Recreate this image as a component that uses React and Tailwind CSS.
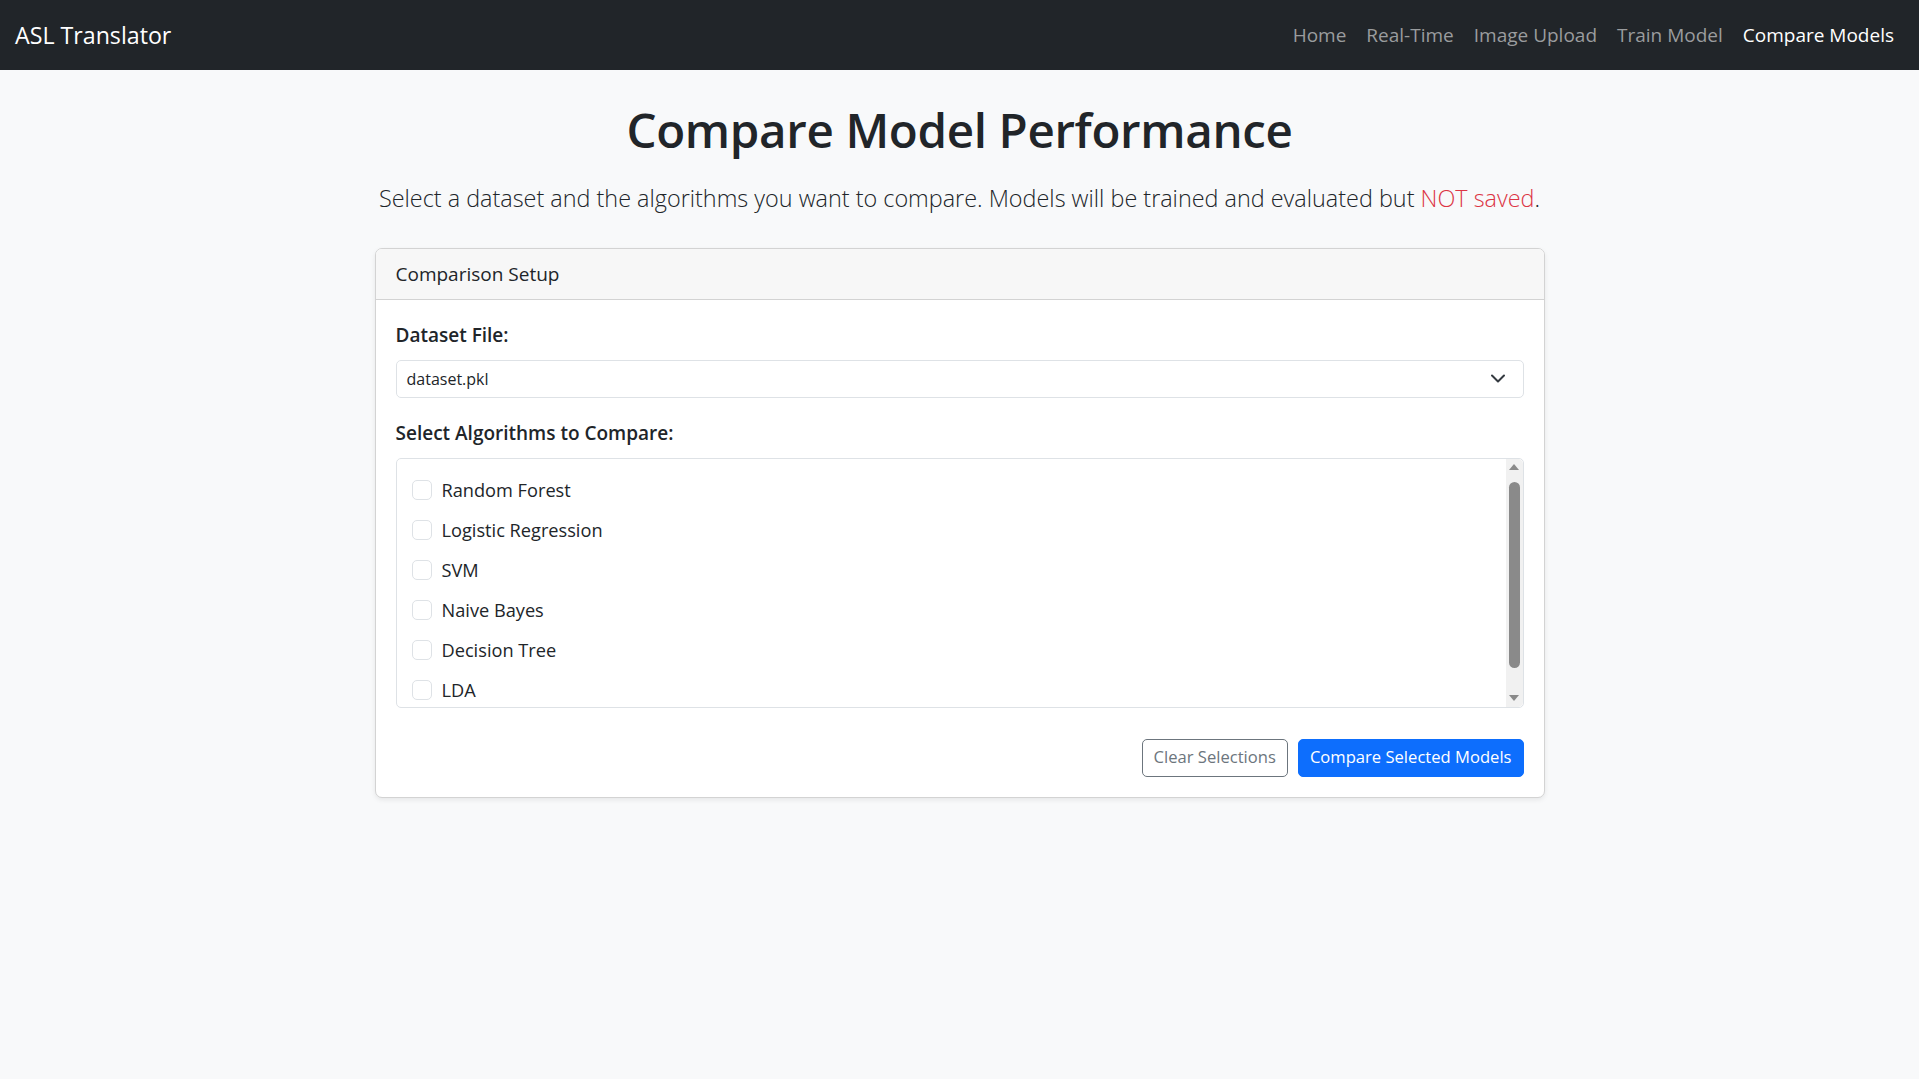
import React from "react";

const links = ["Home", "Real-Time", "Image Upload", "Train Model", "Compare Models"];
const algorithms = [
  "Random Forest",
  "Logistic Regression",
  "SVM",
  "Naive Bayes",
  "Decision Tree",
  "LDA",
];

function Navbar() {
  return (
    <nav className="h-[70px] bg-[#212529] flex items-center justify-between px-[15px]">
      <a href="#" className="text-[23.2px] leading-[37px] text-white">
        ASL Translator
      </a>
      <div className="flex">
        {links.map((l) => (
          <a
            key={l}
            href="#"
            className={
              "px-[10px] text-[19px] leading-[30px] " +
              (l === "Compare Models" ? "text-white" : "text-[#9a9c9e]")
            }
          >
            {l}
          </a>
        ))}
      </div>
    </nav>
  );
}

function FakeScrollbar() {
  return (
    <div className="w-[17px] bg-[#f1f1f1] flex flex-col items-center rounded-tr-[5px] rounded-br-[5px]">
      <div className="h-[17px] flex items-center justify-center">
        <svg width="10" height="6" viewBox="0 0 10 6">
          <path d="M5 0 L10 6 L0 6 Z" fill="#8a8a8a" />
        </svg>
      </div>
      <div className="w-[11px] h-[186px] mt-[6px] rounded-full bg-[#8a8a8a]" />
      <div className="flex-1" />
      <div className="h-[17px] flex items-center justify-center">
        <svg width="10" height="6" viewBox="0 0 10 6">
          <path d="M0 0 L10 0 L5 6 Z" fill="#8a8a8a" />
        </svg>
      </div>
    </div>
  );
}

export default function App() {
  return (
    <div className="min-h-screen bg-[#f8f9fa] text-[#212529] font-['Open_Sans',sans-serif]">
      <Navbar />

      <main className="w-[1170px] mx-auto pt-[30px]">
        <h1 className="text-center text-[47.5px] font-semibold tracking-[-0.35px] leading-[60px] mb-[20px]">
          Compare Model Performance
        </h1>
        <p className="text-center text-[23.4px] font-light leading-[37.5px] mb-[30px] whitespace-nowrap">
          Select a dataset and the algorithms you want to compare. Models will be trained and evaluated but{" "}
          <span className="text-[#dc3545]">NOT saved</span>.
        </p>

        {/* Comparison card */}
        <div className="bg-white border border-[#d3d3d3] rounded-[7px] shadow-[0_2px_5px_rgba(0,0,0,0.075)] overflow-hidden">
          <div className="bg-[#f7f7f7] border-b border-[#d3d3d3] px-[20px] py-[10px] text-[19px] leading-[30px]">
            Comparison Setup
          </div>
          <div className="p-[20px]">
            <label className="block text-[19px] leading-[30px] font-semibold mb-[10px]">Dataset File:</label>
            <div className="h-[38px] border border-[#dee2e6] rounded-[5px] flex items-center justify-between pl-[10px] pr-[18px] text-[16px] mb-[20px]">
              <span>dataset.pkl</span>
              <svg width="14" height="9" viewBox="0 0 14 9" fill="none">
                <path d="M1 1.5 L7 7.5 L13 1.5" stroke="#343a40" strokeWidth="2" strokeLinecap="round" strokeLinejoin="round" />
              </svg>
            </div>

            <label className="block text-[19px] leading-[30px] font-semibold mb-[10px]">
              Select Algorithms to Compare:
            </label>
            <div className="h-[250px] border border-[#dee2e6] rounded-[5px] flex">
              <div className="flex-1 overflow-hidden pl-[15px] pt-[16px] flex flex-col gap-[10px]">
                {algorithms.map((a) => (
                  <label key={a} className="flex items-center gap-[10px] text-[18.2px] leading-[30px] shrink-0">
                    <input
                      type="checkbox"
                      className="appearance-none w-[20px] h-[20px] border border-[#dee2e6] rounded-[5px] bg-white"
                    />
                    {a}
                  </label>
                ))}
              </div>
              <FakeScrollbar />
            </div>

            <div className="flex justify-end gap-[10px] mt-[31px]">
              <button className="h-[38px] px-[11px] border border-[#6c757d] text-[#6c757d] rounded-[5px] text-[16.6px]">
                Clear Selections
              </button>
              <button className="h-[38px] px-[11px] bg-[#0d6efd] text-white rounded-[5px] text-[16.6px] border border-[#0d6efd]">
                Compare Selected Models
              </button>
            </div>
          </div>
        </div>
      </main>
    </div>
  );
}
